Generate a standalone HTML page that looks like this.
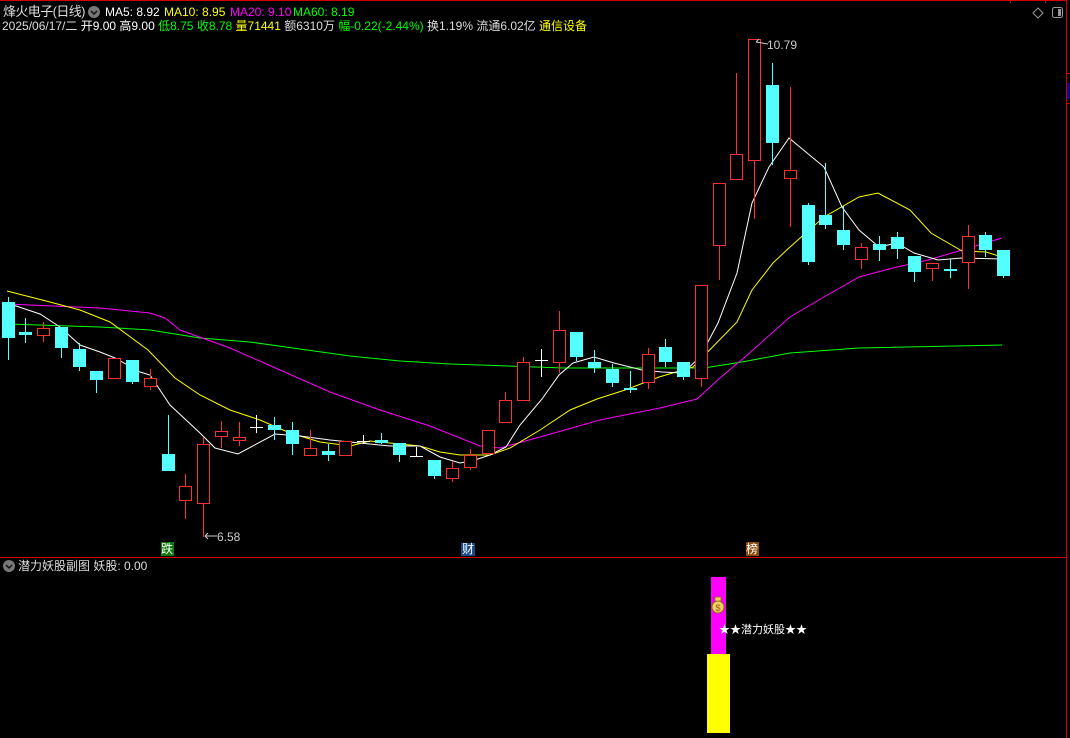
<!DOCTYPE html>
<html><head><meta charset="utf-8"><style>
html,body{margin:0;padding:0;background:#000;}
body{width:1070px;height:738px;overflow:hidden;position:relative;font-family:"Liberation Sans","Noto Sans CJK SC",sans-serif;}
.t{position:absolute;white-space:nowrap;font-size:12px;line-height:14px;}
svg{position:absolute;left:0;top:0;}
</style></head><body>
<svg id="s" width="1070" height="738" viewBox="0 0 1070 738" xmlns="http://www.w3.org/2000/svg">
<line x1="0" y1="0.5" x2="1067" y2="0.5" stroke="#d00000"/>
<line x1="1010.5" y1="0" x2="1010.5" y2="3" stroke="#d00000"/>
<line x1="1045.5" y1="0" x2="1045.5" y2="3" stroke="#d00000"/>
<line x1="1066.5" y1="0" x2="1066.5" y2="738" stroke="#d00000"/>
<line x1="1066" y1="73.5" x2="1070" y2="73.5" stroke="#d00000"/>
<line x1="1066" y1="103.5" x2="1070" y2="103.5" stroke="#d00000"/>
<rect x="1067" y="83" width="3" height="16" fill="#0a0a8a"/>
<line x1="0" y1="557.5" x2="1066" y2="557.5" stroke="#d00000"/>
<path d="M1038 8 L1043 13 L1038 18 L1033 13 Z" fill="none" stroke="#999"/>
<rect x="1052.5" y="7.5" width="10" height="10" rx="2" fill="none" stroke="#999"/>
<rect x="1058" y="9" width="3" height="7" fill="#999"/>
<circle cx="94" cy="12" r="6" fill="#777"/>
<path d="M91 11 L94 14 L97 11" fill="none" stroke="#111" stroke-width="1.5"/>
<circle cx="9" cy="566" r="6" fill="#777"/>
<path d="M6 565 L9 568 L12 565" fill="none" stroke="#111" stroke-width="1.5"/>
<g id="ma" fill="none" stroke-width="1">
<polyline stroke="#00ff00" points="7,324 100,327 150,330 200,338 250,342 300,349 350,356 400,361 450,364 480,365 563,368 704,368 742,362 790,353 859,348 955,346 1002,345"/>
<polyline stroke="#ff00ff" points="7,304 100,308 150,313 165,318 180,330 230,348 280,370 330,392 380,410 430,426 480,446 500,448 540,437 600,420 660,408 697,399 721,377 745,357 790,317 824,297 859,277 893,268 928,260 962,250 1002,238"/>
<polyline stroke="#ffff00" points="7,291 50,302 80,310 110,322 148,350 175,378 200,395 230,410 260,420 290,433 320,442 350,446 370,441 400,444 420,446 440,452 460,455 490,455 510,448 540,430 570,410 597,399 625,390 659,377 693,367 737,322 752,290 773,263 790,247 824,217 859,197 878,193 910,210 931,233 962,251 986,252 1002,257"/>
<polyline stroke="#ffffff" points="7,303 40,314 60,327 80,345 100,352 115,358 140,372 150,375 170,405 200,433 215,448 238,454 275,434 300,436 330,440 360,443 390,446 420,446 440,457 460,463 475,460 490,455 506,447 520,425 542,399 559,375 573,363 594,357 614,363 642,370 662,372 683,373 700,357 718,323 737,273 752,203 769,167 789,138 824,167 842,207 859,230 879,247 897,243 914,253 938,260 962,258 1002,259"/>
</g>
<g id="cd"></g>
<path d="M205 536 L217 536 M205 536 L208 533 M205 536 L208 539" stroke="#ccc" fill="none"/>
<path d="M756 42 L768 44 M756 42 L759 39" stroke="#ccc" fill="none"/>
<rect x="161" y="542" width="13" height="14" fill="#0a7a0a"/>
<rect x="461" y="543" width="14" height="13" fill="#1a4a8a"/>
<rect x="746" y="542" width="13" height="14" fill="#8a4a0a"/>
<rect x="711" y="577" width="15" height="77" fill="#ff00ff"/>
<rect x="707" y="654" width="23" height="79" fill="#ffff00"/>
<ellipse cx="718" cy="607" rx="6" ry="6" fill="#f0d060" stroke="#8a6a10"/>
<rect x="715" y="597" width="6" height="4" fill="#f0d060" stroke="#8a6a10" stroke-width="0.8"/>
<text x="718" y="611" font-size="9" fill="#a05020" text-anchor="middle" font-family="Liberation Sans">$</text>
</svg>
<div class="t" style="left:3px;top:5px;color:#ddd;font-size:13px;letter-spacing:-0.6px">烽火电子(日线)</div>
<div class="t" style="left:105px;top:5px;color:#fff">MA5: 8.92</div>
<div class="t" style="left:164px;top:5px;color:#ffff00">MA10: 8.95</div>
<div class="t" style="left:230px;top:5px;color:#ff00ff">MA20: 9.10</div>
<div class="t" style="left:293px;top:5px;color:#00ff00">MA60: 8.19</div>
<div class="t" style="left:2px;top:19px;color:#ddd"><span>2025/06/17/二 </span><span style="color:#fff">开9.00 高9.00 </span><span style="color:#00ff00">低8.75 收8.78 </span><span style="color:#ffff00">量71441 </span><span style="color:#ddd">额6310万 </span><span style="color:#00ff00">幅-0.22(-2.44%) </span><span style="color:#ddd">换1.19% 流通6.02亿 </span><span style="color:#ffff00">通信设备</span></div>
<div class="t" style="left:767px;top:38px;color:#ccc">10.79</div>
<div class="t" style="left:217px;top:530px;color:#ccc">6.58</div>
<div class="t" style="left:161px;top:542px;color:#fff;font-size:12px">跌</div>
<div class="t" style="left:462px;top:542px;color:#fff;font-size:12px">财</div>
<div class="t" style="left:746px;top:542px;color:#fff;font-size:12px">榜</div>
<div class="t" style="left:18px;top:559px;color:#ddd;font-size:12px">潜力妖股副图 妖股: 0.00</div>
<div class="t" style="left:719px;top:623px;color:#fff;font-size:11px">★★潜力妖股★★</div>
<script>
var D=[["c",302,338,297,360],["c",332,335,318,343],["r",328,335,322,342],["c",327,348,327,358],["c",349,367,343,371],["c",371,380,371,393],["r",358,378,358,378],["c",360,382,360,384],["r",378,386,369,390],["c",454,471,415,471],["r",486,500,474,519],["r",444,503,437,537],["r",431,436,421,448],["r",437,440,422,446],["w",427,427,415,433],["c",425,430,417,440],["c",430,444,422,455],["r",448,455,430,455],["c",451,455,444,461],["r",441,455,441,455],["w",441,441,435,444],["c",440,443,433,444],["c",443,455,443,462],["w",456,456,447,457],["c",460,476,460,479],["r",468,478,461,482],["r",455,467,449,470],["r",430,453,430,453],["r",400,422,392,423],["r",362,400,357,400],["w",360,360,349,377],["r",330,362,311,373],["c",332,357,332,361],["c",362,368,350,373],["c",369,383,364,387],["c",388,390,371,393],["r",354,382,348,389],["c",347,362,339,367],["c",362,377,362,380],["r",285,378,285,387],["r",183,245,183,280],["r",154,179,73,179],["r",39,160,39,219],["c",85,143,63,165],["r",170,178,87,227],["c",205,262,203,265],["c",215,225,163,229],["c",230,245,206,250],["r",247,259,243,269],["c",244,250,236,261],["c",237,249,232,259],["c",256,272,256,282],["r",263,268,263,281],["c",269,271,259,278],["r",236,262,225,289],["c",235,250,232,257],["c",250,276,250,278]];
var g=document.getElementById("cd"),h="";
D.forEach(function(d,i){var c=Math.round(7.5+17.78*i),t=d[0];
var col=t=="r"?"#ff3030":t=="c"?"#54ffff":"#ffffff";
h+='<rect x="'+c+'" y="'+d[3]+'" width="1" height="'+(d[4]-d[3])+'" fill="'+col+'"/>';
if(t=="r"){var hh=Math.max(2,d[2]-d[1]);
h+='<rect x="'+(c-6)+'" y="'+d[1]+'" width="13" height="'+(hh+1)+'" fill="'+col+'"/>';
if(hh>1)h+='<rect x="'+(c-5)+'" y="'+(d[1]+1)+'" width="11" height="'+(hh-1)+'" fill="#000"/>';}
else if(t=="c")h+='<rect x="'+(c-6)+'" y="'+d[1]+'" width="13" height="'+Math.max(2,d[2]-d[1])+'" fill="'+col+'"/>';
else h+='<rect x="'+(c-6)+'" y="'+d[1]+'" width="13" height="1" fill="'+col+'"/>';});
g.innerHTML=h;
</script>
</body></html>
